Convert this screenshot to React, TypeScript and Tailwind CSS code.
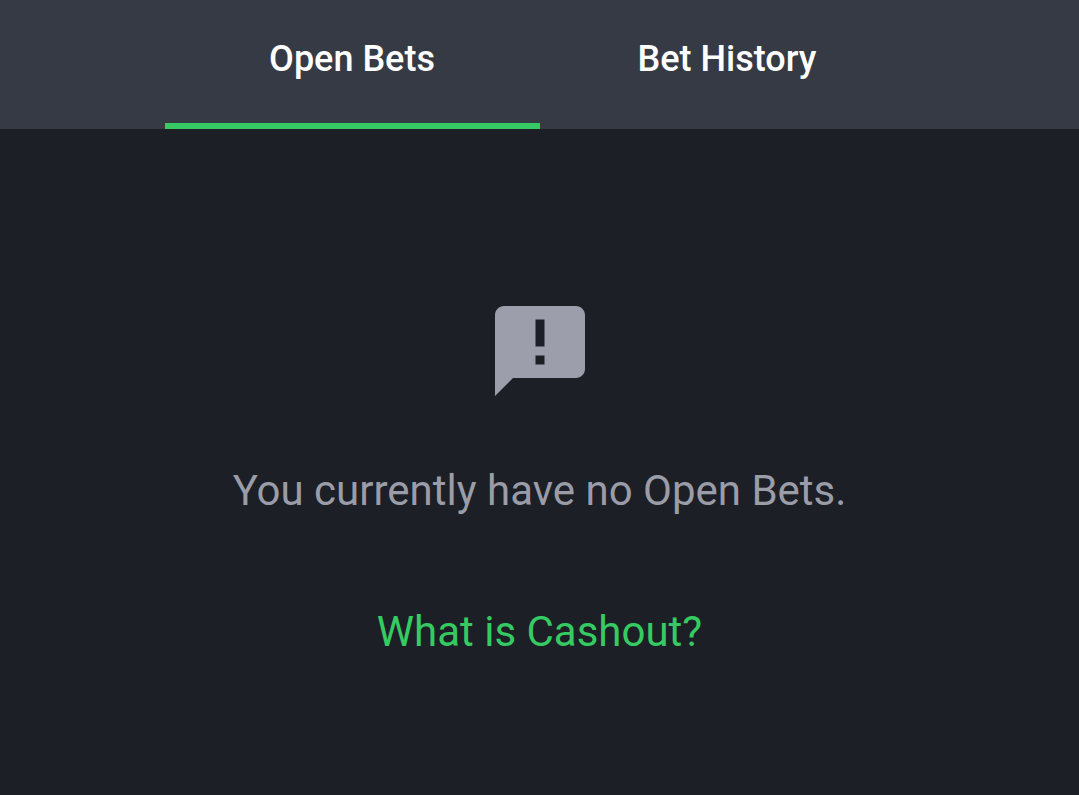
import React, { useState } from 'react';

const TABS = [
  { id: 'open', label: 'Open Bets' },
  { id: 'history', label: 'Bet History' },
];

const EmptyIcon: React.FC = () => (
  <svg viewBox="0 0 20 20" className="h-[90px] w-[90px] fill-[#9c9fab]" aria-hidden="true">
    <path d="M18 0H2C.9 0 0 .9 0 2v18l4-4h14c1.1 0 2-.9 2-2V2c0-1.1-.9-2-2-2zm-7 13H9v-2h2v2zm0-4H9V3h2v6z" />
  </svg>
);

const App: React.FC = () => {
  const [activeTab, setActiveTab] = useState('open');

  return (
    <div className="flex min-h-screen flex-col bg-[#1c1f26] font-['Roboto',sans-serif]">
      <nav className="flex justify-center bg-[#363a44]">
        {TABS.map((tab) => (
          <button
            key={tab.id}
            type="button"
            onClick={() => setActiveTab(tab.id)}
            className={`w-[375px] border-b-6 pt-9 pb-10 text-[36px] leading-[47px] font-medium text-white ${
              activeTab === tab.id ? 'border-[#35cb62]' : 'border-transparent'
            }`}
          >
            {tab.label}
          </button>
        ))}
      </nav>

      <main className="flex flex-col items-center px-6 pt-[177px] pb-16 text-center text-[42px] leading-[61px]">
        <EmptyIcon />
        <p className="mt-16 text-[#9a9ca8]">You currently have no Open Bets.</p>
        <a href="#cashout" className="mt-20 text-[#35cb62]">
          What is Cashout?
        </a>
      </main>
    </div>
  );
};

export default App;
